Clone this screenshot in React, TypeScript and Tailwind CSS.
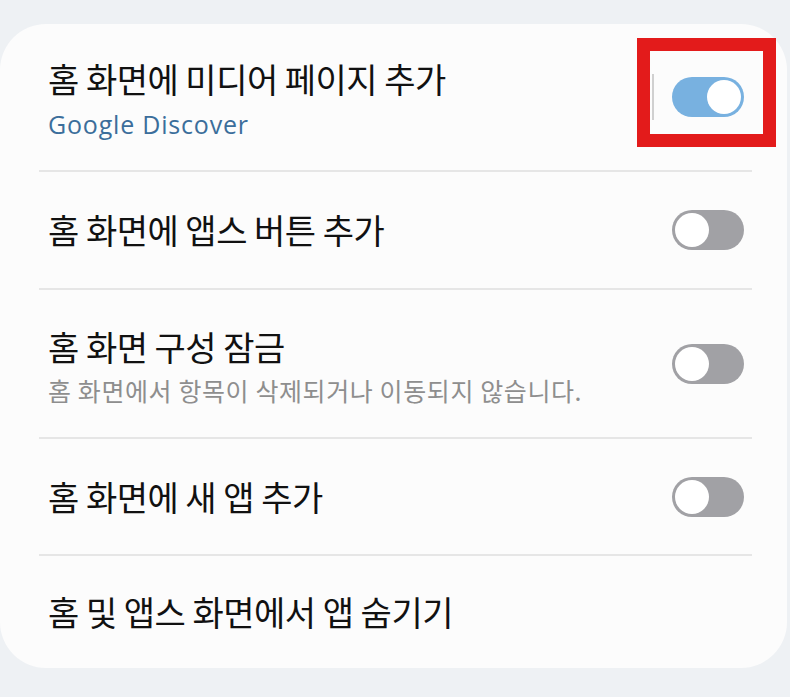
import React from 'react';

type Row = {
  title: string;
  sub?: string;
  subTone?: 'blue' | 'gray';
  toggle?: 'on' | 'off';
  h: string;
};

const rows: Row[] = [
  { title: '홈 화면에 미디어 페이지 추가', sub: 'Google Discover', subTone: 'blue', toggle: 'on', h: 'h-[146px]' },
  { title: '홈 화면에 앱스 버튼 추가', toggle: 'off', h: 'h-[116px]' },
  { title: '홈 화면 구성 잠금', sub: '홈 화면에서 항목이 삭제되거나 이동되지 않습니다.', subTone: 'gray', toggle: 'off', h: 'h-[147px]' },
  { title: '홈 화면에 새 앱 추가', toggle: 'off', h: 'h-[115px]' },
  { title: '홈 및 앱스 화면에서 앱 숨기기', h: 'h-[112px]' },
];

const Toggle = ({ on }: { on: boolean }) =>
  on ? (
    <div className="w-[72px] h-[40px] rounded-full bg-[#78b1e0] flex items-center justify-end pr-[3px]">
      <div className="w-[34px] h-[34px] rounded-full bg-white" />
    </div>
  ) : (
    <div className="w-[72px] h-[40px] rounded-full bg-[#a1a1a5] flex items-center pl-[3px]">
      <div className="w-[34px] h-[34px] rounded-full bg-white" />
    </div>
  );

export default function App() {
  return (
    <div className="w-[790px] h-[697px] bg-[#eef1f4] pt-[24px] overflow-hidden relative" style={{ fontFamily: '"Noto Sans CJK KR", "Noto Sans", sans-serif' }}>
      <div className="w-[787px] bg-[#fcfcfc] rounded-[46px]">
        {rows.map((r, i) => (
          <div key={i}>
            {i > 0 && <div className="ml-[39px] mr-[35px] h-[2px] bg-[#e6e6e6]" />}
            <div className={`${r.h} flex items-center justify-between pl-[48px] pr-[43px]`}>
              <div className={`flex flex-col ${r.sub ? 'pt-[6px]' : ''}`}>
                <span className="text-[34px] leading-[40px] text-[#111111] tracking-[-0.5px]">{r.title}</span>
                {r.sub && r.subTone === 'blue' && (
                  <span className="text-[25px] leading-[34px] mt-[8px] text-[#3b6e9b] tracking-[0.8px]" style={{ fontFamily: '"Open Sans", "Noto Sans", sans-serif' }}>
                    {r.sub}
                  </span>
                )}
                {r.sub && r.subTone === 'gray' && (
                  <span className="text-[25px] leading-[34px] mt-[6px] text-[#8e8e8e] tracking-[0.6px]">{r.sub}</span>
                )}
              </div>
              {r.toggle && (
                <div className="flex items-center gap-[18px]">
                  {r.toggle === 'on' && <div className="w-[2px] h-[46px] bg-[#d0d0d0]" />}
                  <Toggle on={r.toggle === 'on'} />
                </div>
              )}
            </div>
          </div>
        ))}
      </div>
      <div className="absolute left-[637px] top-[38px] w-[139px] h-[109px] border-[13px] border-[#e31b1b]" />
    </div>
  );
}
